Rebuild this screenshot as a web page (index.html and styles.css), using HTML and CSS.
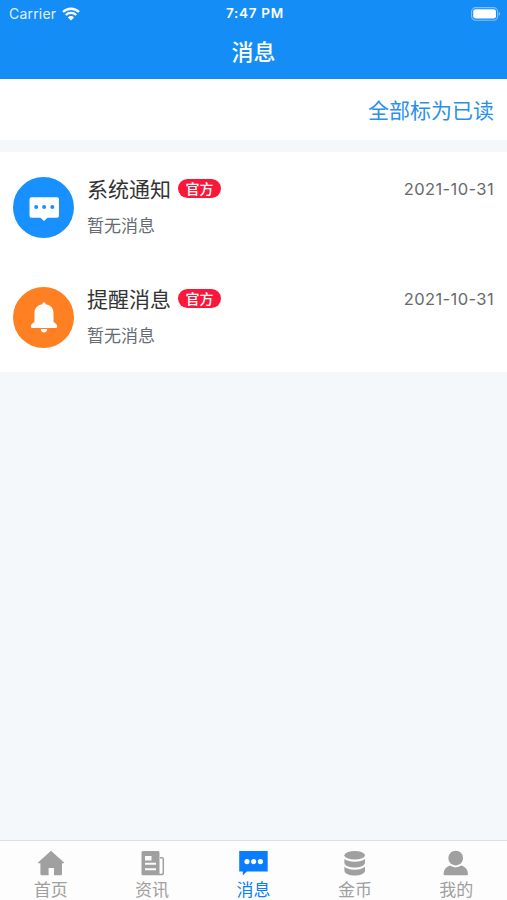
FILE: index.html
```html
<!DOCTYPE html>
<html lang="zh-CN">
<head>
    <meta charset="UTF-8">
    <meta name="viewport" content="width=device-width, initial-scale=1.0">
    <title>消息</title>
    <link rel="stylesheet" href="styles.css">
</head>
<body>
    <header class="header">
        <div class="status-bar">
            <div class="carrier">
                <span>Carrier</span>
                <svg class="wifi" viewBox="0 0 18 14">
                    <path d="M1 5 A11.5 11.5 0 0 1 17 5" />
                    <path d="M3.8 8 A7.5 7.5 0 0 1 14.2 8" />
                    <path class="wifi-dot" d="M9 13.6 L5.9 10.4 A4.4 4.4 0 0 1 12.1 10.4 Z" />
                </svg>
            </div>
            <span class="time">7:47 PM</span>
            <div class="battery">
                <svg width="30" height="14" viewBox="0 0 30 14">
                    <rect x="0.6" y="0.6" width="26" height="12.6" rx="4" fill="none" stroke="#fff" stroke-opacity="0.45" stroke-width="1.1" />
                    <rect x="2.2" y="2.2" width="22.8" height="9.4" rx="2.4" fill="#fff" />
                    <path d="M27.8 4.8 Q30.4 6.9 27.8 9 Z" fill="#fff" fill-opacity="0.5" />
                </svg>
            </div>
        </div>
        <h1>消息</h1>
    </header>

    <div class="read-all"><a href="#">全部标为已读</a></div>

    <main class="message-list">
        <div class="message">
            <div class="avatar blue">
                <svg width="61" height="61" viewBox="0 0 61 61">
                    <path d="M18.5 20.2 H44 Q46 20.2 46 22.2 V38.8 Q46 40.8 44 40.8 H34.5 L31 44 L27.5 40.8 H18.5 Q16.5 40.8 16.5 38.8 V22.2 Q16.5 20.2 18.5 20.2 Z" fill="#fff" />
                    <circle cx="23.2" cy="30" r="2" fill="#1890ff" />
                    <circle cx="31.1" cy="30" r="2" fill="#1890ff" />
                    <circle cx="39.3" cy="30" r="2" fill="#1890ff" />
                </svg>
            </div>
            <div class="message-body">
                <div class="title-row">
                    <h2>系统通知</h2>
                    <span class="badge">官方</span>
                    <span class="date">2021-10-31</span>
                </div>
                <p>暂无消息</p>
            </div>
        </div>
        <div class="message">
            <div class="avatar orange">
                <svg width="61" height="61" viewBox="0 0 61 61" fill="#fff">
                    <path d="M31 15.3 Q32.4 15.3 32.7 17.3 C37.8 18.2 40.5 21.5 40.5 26 V34.8 L43.4 37.2 Q44 37.8 44 38.6 V40 Q44 41 43 41 H19 Q18 41 18 40 V38.6 Q18 37.8 18.6 37.2 L21.5 34.8 V26 C21.5 21.5 24.2 18.2 29.3 17.3 Q29.6 15.3 31 15.3 Z" />
                    <path d="M27.8 42 H34.2 Q33.8 45.5 31 45.5 Q28.2 45.5 27.8 42 Z" />
                </svg>
            </div>
            <div class="message-body">
                <div class="title-row">
                    <h2>提醒消息</h2>
                    <span class="badge">官方</span>
                    <span class="date">2021-10-31</span>
                </div>
                <p>暂无消息</p>
            </div>
        </div>
    </main>

    <nav class="tabbar">
        <a href="#" class="tab">
            <svg viewBox="0 0 30 26">
                <path d="M15 0.8 L28 12.4 Q28.2 13.3 27.2 13.3 H26 V24 Q26 25.3 24.7 25.3 H18 V18 H12.6 V25.3 H5.7 Q4.4 25.3 4.4 24 V13.3 H2.8 Q1.8 13.3 2 12.4 Z" />
            </svg>
            <span>首页</span>
        </a>
        <a href="#" class="tab">
            <svg viewBox="0 0 30 26">
                <path fill-rule="evenodd" d="M6 1 H21 Q22.5 1 22.5 2.5 V25.2 H6 Q4.5 25.2 4.5 23.7 V2.5 Q4.5 1 6 1 Z M8 6 V10.4 H14.5 V6 Z M8 12.8 V14.8 H19 V12.8 Z M8 18.3 V20.3 H19 V18.3 Z" />
                <path class="outline" d="M23 7.8 H25 Q26.3 7.8 26.3 9.1 V22.4 Q26.3 24.5 24.4 24.5 H22" />
            </svg>
            <span>资讯</span>
        </a>
        <a href="#" class="tab active">
            <svg viewBox="0 0 30 26">
                <path fill-rule="evenodd" d="M0.2 1 H28.7 V21.5 H7.8 L3.8 25.4 V21.5 H0.2 Z M8 9 A2.6 2.6 0 1 0 8 14.2 A2.6 2.6 0 1 0 8 9 Z M14.7 9 A2.6 2.6 0 1 0 14.7 14.2 A2.6 2.6 0 1 0 14.7 9 Z M21.4 9 A2.6 2.6 0 1 0 21.4 14.2 A2.6 2.6 0 1 0 21.4 9 Z" />
            </svg>
            <span>消息</span>
        </a>
        <a href="#" class="tab">
            <svg viewBox="0 0 30 26">
                <ellipse cx="14.7" cy="5.2" rx="10.3" ry="4.3" />
                <path d="M4.4 9 Q8 11.8 14.7 11.8 T25 9 V12.8 C24.2 19.2 5.2 19.2 4.4 12.8 Z" />
                <path d="M4.4 16.8 Q8 19.8 14.7 19.8 T25 16.8 V20.8 C24.2 27.2 5.2 27.2 4.4 20.8 Z" />
            </svg>
            <span>金币</span>
        </a>
        <a href="#" class="tab">
            <svg viewBox="0 0 30 26">
                <circle cx="14.7" cy="8.1" r="7.4" />
                <path d="M8.7 15.6 Q14.7 19.2 20.7 15.6 Q26.8 18 27 24 Q27 25.3 25.7 25.3 H3.8 Q2.5 25.3 2.5 24 Q2.7 18 8.7 15.6 Z" />
            </svg>
            <span>我的</span>
        </a>
    </nav>
</body>
</html>
```
FILE: styles.css
```css
* {
    box-sizing: border-box;
    margin: 0;
    padding: 0;
}

body {
    display: flex;
    flex-direction: column;
    height: 100vh;
    overflow: hidden;
    background-color: #f4f8fa;
    color: #333;
    font-family: Inter, "Noto Sans CJK SC", sans-serif;
}

a {
    text-decoration: none;
}

.header {
    height: 79px;
    background-color: #158df6;
    color: #fff;
}

.status-bar {
    display: grid;
    grid-template-columns: 1fr auto 1fr;
    align-items: center;
    height: 27px;
    padding: 0 6px 0 9px;
    font-size: 14px;
    line-height: 27px;
}

.carrier {
    display: flex;
    align-items: center;
    gap: 6px;
    color: #e3f1fe;
    letter-spacing: 0.2px;
}

.wifi {
    width: 18px;
    height: 14px;
    fill: none;
    stroke: #fff;
    stroke-width: 2.3;
}

.wifi .wifi-dot {
    fill: #fff;
    stroke: none;
}

.time {
    font-size: 13.5px;
    font-weight: 600;
    letter-spacing: 0.7px;
}

.battery {
    display: flex;
    justify-content: flex-end;
}

.header h1 {
    font-size: 22px;
    font-weight: 500;
    line-height: 50px;
    text-align: center;
}

.read-all {
    height: 61px;
    margin-bottom: 12px;
    padding-right: 13px;
    background-color: #fff;
    font-size: 21px;
    line-height: 64px;
    text-align: right;
}

.read-all a {
    color: #2a8fe8;
}

.message-list {
    background-color: #fff;
}

.message {
    display: flex;
    align-items: center;
    gap: 13px;
    height: 110px;
    padding: 0 13px;
}

.avatar {
    width: 61px;
    height: 61px;
    border-radius: 50%;
}

.avatar svg {
    display: block;
}

.blue {
    background-color: #1890ff;
}

.orange {
    background-color: #ff7f23;
}

.message-body {
    flex: 1;
}

.title-row {
    display: flex;
    align-items: center;
    height: 36px;
}

.title-row h2 {
    padding-bottom: 2px;
    font-size: 21px;
    font-weight: 400;
}

.badge {
    width: 43px;
    height: 19px;
    margin-left: 7px;
    border-radius: 10px;
    background-color: #fb1739;
    color: #fff;
    font-size: 14px;
    font-weight: 500;
    line-height: 19px;
    text-align: center;
}

.date {
    margin-left: auto;
    color: #66696d;
    font-size: 16.5px;
    letter-spacing: 0.4px;
}

.message-body p {
    height: 37px;
    color: #666b73;
    font-size: 17px;
    line-height: 39px;
}

.tabbar {
    display: flex;
    height: 60px;
    margin-top: auto;
    border-top: 1px solid #dcdfe1;
    background-color: #fdfdfd;
}

.tab {
    display: flex;
    flex: 1;
    flex-direction: column;
    align-items: center;
    padding-top: 9px;
    color: #a0a0a0;
    font-size: 17px;
    line-height: 28px;
}

.tab svg {
    flex-shrink: 0;
    width: 30px;
    height: 26px;
    fill: currentColor;
}

.tab .outline {
    fill: none;
    stroke: currentColor;
    stroke-width: 1.5;
}

.tab.active {
    color: #087dff;
}
```
